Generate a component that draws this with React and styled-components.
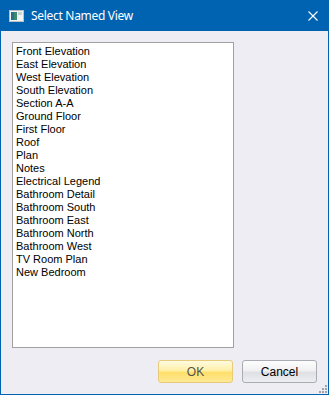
import styled, { createGlobalStyle } from "styled-components";

const GlobalStyle = createGlobalStyle`
  html, body {
    margin: 0;
    padding: 0;
    background: #ffffff;
  }
`;

const views = [
  "Front Elevation",
  "East Elevation",
  "West Elevation",
  "South Elevation",
  "Section A-A",
  "Ground Floor",
  "First Floor",
  "Roof",
  "Plan",
  "Notes",
  "Electrical Legend",
  "Bathroom Detail",
  "Bathroom South",
  "Bathroom East",
  "Bathroom North",
  "Bathroom West",
  "TV Room Plan",
  "New Bedroom",
];

const App = () => {
  return (
    <>
      <GlobalStyle />
      <Window>
        <TitleBar>
          <AppIcon viewBox="0 0 15 12">
            <rect x="0.5" y="0.5" width="14" height="11" fill="#f4f4f4" stroke="#b9c2c6" />
            <rect x="2" y="2" width="6" height="8" fill="#3d8a6e" />
            <rect x="2" y="2" width="3" height="8" fill="#2b6f8e" />
            <rect x="9" y="2" width="4" height="3" fill="#c9d3d6" />
          </AppIcon>
          <Title>Select Named View</Title>
          <CloseButton viewBox="0 0 10 10">
            <path d="M0.5 0.5 L9.5 9.5 M9.5 0.5 L0.5 9.5" stroke="#ffffff" strokeWidth="1.1" />
          </CloseButton>
        </TitleBar>
        <Body>
          <ListBox>
            {views.map((v) => (
              <ListItem key={v}>{v}</ListItem>
            ))}
          </ListBox>
          <ButtonRow>
            <DialogButton $primary>OK</DialogButton>
            <DialogButton>Cancel</DialogButton>
          </ButtonRow>
          <Grip viewBox="0 0 8 8">
            <rect x="6" y="0" width="2" height="2" fill="#9ea3ad" />
            <rect x="3" y="3" width="2" height="2" fill="#9ea3ad" />
            <rect x="6" y="3" width="2" height="2" fill="#9ea3ad" />
            <rect x="0" y="6" width="2" height="2" fill="#9ea3ad" />
            <rect x="3" y="6" width="2" height="2" fill="#9ea3ad" />
            <rect x="6" y="6" width="2" height="2" fill="#9ea3ad" />
          </Grip>
        </Body>
      </Window>
    </>
  );
};

export default App;

const Window = styled.div`
  width: 329px;
  height: 395px;
  box-sizing: border-box;
  border: 1px solid #0063b1;
  border-top: none;
  display: flex;
  flex-direction: column;
  background: #eeedf3;
`;

const TitleBar = styled.div`
  height: 31px;
  flex-shrink: 0;
  background: #0063b1;
  display: flex;
  align-items: center;
  padding: 0 10px 0 8px;
`;

const AppIcon = styled.svg`
  width: 15px;
  height: 12px;
  margin-right: 7px;
`;

const Title = styled.span`
  flex: 1;
  color: #ffffff;
  font-family: "Noto Sans", "Open Sans", sans-serif;
  font-size: 12px;
  letter-spacing: -0.3px;
`;

const CloseButton = styled.svg`
  width: 10px;
  height: 10px;
`;

const Body = styled.div`
  position: relative;
  flex: 1;
  display: flex;
  flex-direction: column;
  padding: 11px 11px 11px 11px;
`;

const ListBox = styled.div`
  width: 222px;
  height: 306px;
  box-sizing: border-box;
  background: #ffffff;
  border: 1px solid #a0a0a0;
  padding: 2px 3px;
  font-family: "Liberation Sans", Arial, sans-serif;
  font-size: 11px;
  color: #000000;
`;

const ListItem = styled.div`
  height: 13px;
  line-height: 13px;
  white-space: nowrap;
`;

const ButtonRow = styled.div`
  display: flex;
  justify-content: flex-end;
  gap: 9px;
  margin-top: 12px;
  padding-right: 0;
`;

const DialogButton = styled.button`
  width: 75px;
  height: 23px;
  box-sizing: border-box;
  border-radius: 3px;
  border: 1px solid ${(p) => (p.$primary ? "#e8cb7a" : "#a9acb2")};
  background: ${(p) =>
    p.$primary
      ? "linear-gradient(#fffbe0 0%, #fff0a8 45%, #ffdf6b 55%, #ffe994 100%)"
      : "linear-gradient(#fdfdfd 0%, #f1f1f3 45%, #dfe0e4 55%, #eceef0 100%)"};
  font-family: "Liberation Sans", Arial, sans-serif;
  font-size: 12px;
  color: ${(p) => (p.$primary ? "#55524c" : "#000000")};
  padding: 0;
`;

const Grip = styled.svg`
  position: absolute;
  right: 1px;
  bottom: 1px;
  width: 8px;
  height: 8px;
`;
